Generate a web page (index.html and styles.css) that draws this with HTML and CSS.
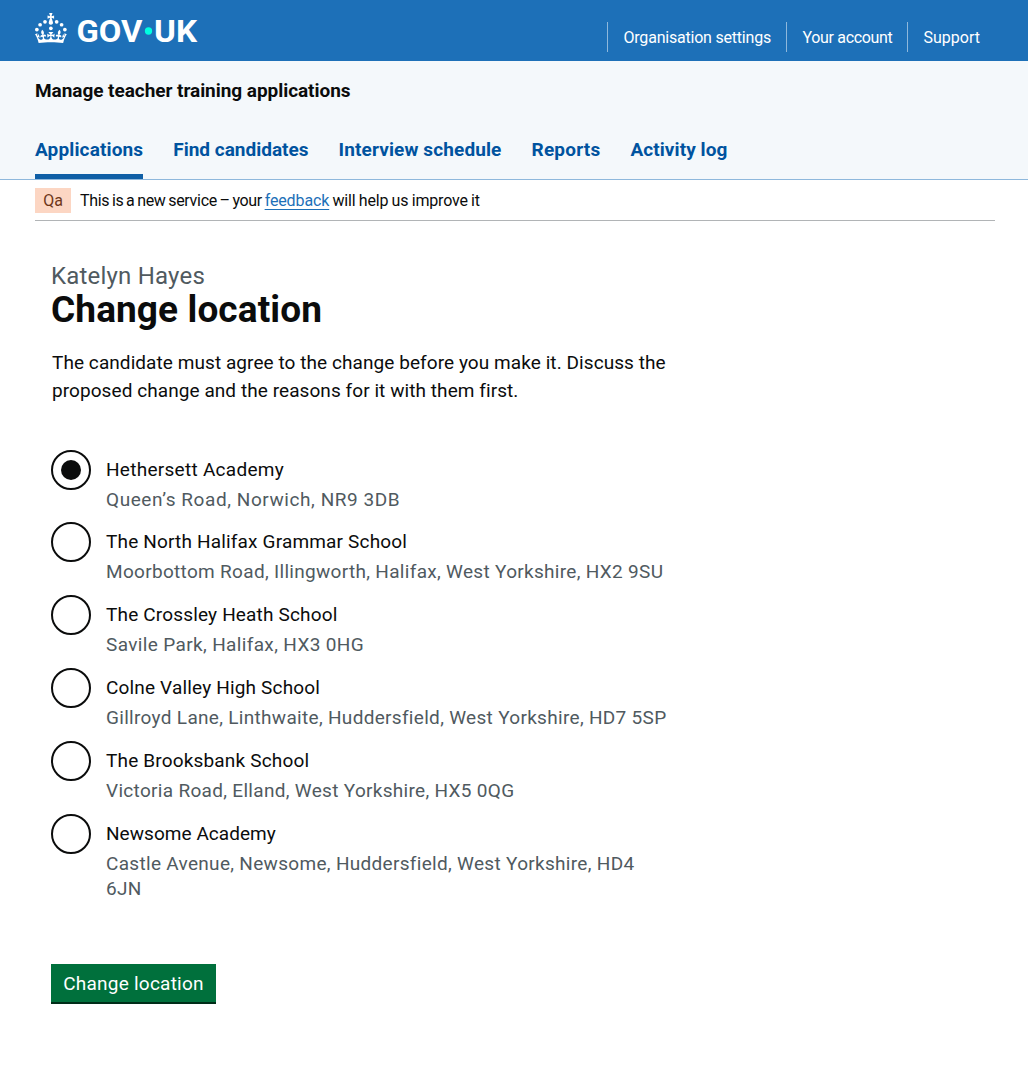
FILE: index.html
```html
<!DOCTYPE html>
<html lang="en">
<head>
<meta charset="utf-8">
<title>Change location - Manage teacher training applications</title>
<link rel="stylesheet" href="styles.css">
</head>
<body>
<header class="header">
  <svg class="logo" viewBox="0 0 324 60" width="162" height="30" role="img" aria-label="GOV.UK">
    <g fill="#fff">
      <circle cx="20" cy="17.6" r="3.7"/><circle cx="10.2" cy="23.5" r="3.7"/><circle cx="3.7" cy="33.2" r="3.7"/>
      <circle cx="31.7" cy="30.6" r="3.7"/><circle cx="43.3" cy="17.6" r="3.7"/><circle cx="53.2" cy="23.5" r="3.7"/><circle cx="59.7" cy="33.2" r="3.7"/>
      <path d="M33.1,9.8c.2-.1.3-.3.5-.5l4.6,2.4v-6.8l-4.6,1.5c-.1-.2-.3-.3-.5-.5l1.9-5.9h-6.7l1.9,5.9c-.2.1-.3.3-.5.5l-4.6-1.5v6.8l4.6-2.4c.1.2.3.3.5.5l-2.6,8c-.9,2.8,1.2,5.7,4.1,5.7h0c3,0,5.1-2.9,4.1-5.7l-2.6-8ZM37,37.9s-3.4,3.8-4.1,6.1c2.2,0,4.2-.5,6.4-2.8l-.7,8.5c-2-2.8-4.4-4.1-5.7-3.8.1,3.1.5,6.7,5.8,7.2,3.7.3,6.7-1.5,7-3.8.4-2.6-2-4.3-3.7-1.6-1.4-4.5,2.4-6.1,4.9-3.2-1.9-4.5-1.8-7.7,2.4-10.9,3,4,2.6,7.3-1.2,11.1,2.4-1.3,6.2,0,4,4.6-1.2-2.8-3.7-2.2-4.2.2-.3,1.7.7,3.7,3,4.2,1.9.3,4.7-.9,7-5.9-1.3,0-2.4.7-3.9,1.7l2.4-8c.6,2.3,1.4,3.7,2.2,4.5.6-1.6.5-2.8,0-5.3l5,1.8c-2.6,3.6-5.2,8.7-7.3,17.5-7.4-1.1-15.7-1.7-24.5-1.7h0c-8.8,0-17.1.6-24.5,1.7-2.1-8.9-4.7-13.9-7.3-17.5l5-1.8c-.5,2.5-.6,3.7,0,5.3.8-.8,1.6-2.3,2.2-4.5l2.4,8c-1.5-1-2.6-1.7-3.9-1.7,2.3,5,5.2,6.2,7,5.9,2.3-.4,3.3-2.4,3-4.2-.5-2.4-3-3.1-4.2-.2-2.2-4.6,1.6-6,4-4.6-3.7-3.7-4.2-7.1-1.2-11.1,4.2,3.2,4.3,6.4,2.4,10.9,2.5-2.8,6.3-1.3,4.9,3.2-1.8-2.7-4.1-1-3.7,1.6.3,2.3,3.3,4.1,7,3.8,5.4-.5,5.7-4.2,5.8-7.2-1.3-.2-3.7,1-5.7,3.8l-.7-8.5c2.2,2.3,4.2,2.7,6.4,2.8-.7-2.3-4.1-6.1-4.1-6.1h10.6,0Z"/>
      <text class="logo-text" x="83" y="57.5" textLength="132" lengthAdjust="spacingAndGlyphs">GOV</text>
      <text class="logo-text" x="238" y="57.5" textLength="86" lengthAdjust="spacingAndGlyphs">UK</text>
    </g>
    <circle cx="227" cy="36" r="7.3" fill="#00ffe0"/>
  </svg>
  <nav class="account">
    <a class="account-link organisation">Organisation settings</a>
    <a class="account-link your-account">Your account</a>
    <a class="account-link support">Support</a>
  </nav>
</header>
<section class="service">
  <div class="service-name">Manage teacher training applications</div>
  <nav class="tabs">
    <a class="tab current">Applications</a>
    <a class="tab find">Find candidates</a>
    <a class="tab interview">Interview schedule</a>
    <a class="tab reports">Reports</a>
    <a class="tab activity">Activity log</a>
  </nav>
</section>
<div class="phase">
  <span class="tag">Qa</span>
  <span class="phase-text"><span class="phase-lead">This is a new service – your </span><a class="link">feedback</a><span class="phase-tail"> will help us improve it</span></span>
</div>
<main class="main">
  <div class="caption">Katelyn Hayes</div>
  <h1 class="title">Change location</h1>
  <p class="intro">The candidate must agree to the change before you make it. Discuss the <br>proposed change and the reasons for it with them first.</p>
  <div class="options">
    <label class="option hethersett"><span class="radio checked"></span><span class="words"><span class="school">Hethersett Academy</span><span class="address">Queen’s Road, Norwich, NR9 3DB</span></span></label>
    <label class="option halifax"><span class="radio"></span><span class="words"><span class="school">The North Halifax Grammar School</span><span class="address">Moorbottom Road, Illingworth, Halifax, West Yorkshire, HX2 9SU</span></span></label>
    <label class="option crossley"><span class="radio"></span><span class="words"><span class="school">The Crossley Heath School</span><span class="address">Savile Park, Halifax, HX3 0HG</span></span></label>
    <label class="option colne"><span class="radio"></span><span class="words"><span class="school">Colne Valley High School</span><span class="address">Gillroyd Lane, Linthwaite, Huddersfield, West Yorkshire, HD7 5SP</span></span></label>
    <label class="option brooksbank"><span class="radio"></span><span class="words"><span class="school">The Brooksbank School</span><span class="address">Victoria Road, Elland, West Yorkshire, HX5 0QG</span></span></label>
    <label class="option newsome"><span class="radio"></span><span class="words"><span class="school">Newsome Academy</span><span class="address">Castle Avenue, Newsome, Huddersfield, West Yorkshire, HD4<br>6JN</span></span></label>
  </div>
  <button class="button">Change location</button>
</main>
</body>
</html>
```
FILE: styles.css
```css
* { box-sizing: border-box; }
body { margin: 0; background: #fff; color: #0b0c0c; font-family: Roboto, "Liberation Sans", sans-serif; font-size: 19px; white-space: nowrap; }
.header { height: 61px; background: #1d70b8; padding: 13px 34px 0 35px; display: flex; justify-content: space-between; align-items: flex-start; }
.logo { display: block; overflow: visible; }
.logo-text { font-size: 61px; font-weight: 700; }
.account { display: flex; margin-top: 9px; }
.account-link { height: 30px; line-height: 32px; font-size: 16px; color: #fff; border-left: 1px solid #8eb8dc; padding-left: 15.5px; }
.organisation { width: 179px; letter-spacing: -0.21px; }
.your-account { width: 121px; letter-spacing: -0.33px; }
.support { width: 87px; }
.service { height: 119px; background: #f4f8fb; border-bottom: 1px solid #8eb8dc; padding: 17px 35px 0; display: flex; flex-direction: column; justify-content: space-between; }
.service-name { font-weight: 700; line-height: 25px; letter-spacing: -0.05px; }
.tabs { display: flex; gap: 30px; height: 59px; }
.tab { color: #00539f; font-weight: 700; line-height: 59px; height: 59px; }
.current { border-bottom: 5px solid #0f5fa6; letter-spacing: 0.14px; }
.interview { letter-spacing: 0.12px; }
.reports { letter-spacing: 0.2px; }
.activity { letter-spacing: 0.08px; }
.phase { margin: 0 33px 0 35px; height: 41px; border-bottom: 1px solid #b1b4b6; display: flex; gap: 9px; align-items: center; font-size: 16px; }
.tag { width: 36px; height: 25px; background: #fcd6c3; color: #6e3619; text-align: center; line-height: 25px; }
.phase-lead { letter-spacing: -0.31px; word-spacing: -1px; }
.phase-tail { letter-spacing: -0.17px; word-spacing: -0.5px; }
.link { color: #1d70b8; text-decoration: underline; text-underline-offset: 3px; letter-spacing: -0.12px; }
.main { padding: 40px 51px 0; }
.caption { font-size: 24px; line-height: 30px; color: #505a5f; letter-spacing: 0.2px; }
.title { margin: -1px 0 0; font-size: 37px; line-height: 40px; font-weight: 700; letter-spacing: 0.1px; }
.intro { margin: 19px 0 0; padding-left: 1px; line-height: 28px; letter-spacing: 0.07px; }
.options { margin-top: 45px; display: flex; flex-direction: column; gap: 11px; }
.option { display: flex; gap: 15px; }
.radio { width: 40px; height: 40px; border: 2px solid #0b0c0c; border-radius: 50%; display: grid; place-items: center; }
.checked::after { content: ""; width: 20px; height: 20px; border-radius: 50%; background: #0b0c0c; }
.words { display: flex; flex-direction: column; }
.school { line-height: 25px; padding-top: 7px; letter-spacing: 0.17px; }
.address { margin-top: 5px; line-height: 25px; color: #505a5f; letter-spacing: 0.31px; }
.hethersett { margin-bottom: -1px; }
.hethersett .school { letter-spacing: 0.28px; }
.hethersett .address { letter-spacing: 0.57px; }
.crossley .address { letter-spacing: 0.36px; }
.newsome .school { letter-spacing: 0.05px; }
.button { margin-top: 63px; width: 165px; height: 40px; border: 0; border-bottom: 2px solid #002d18; padding: 1px 0 0; background: #00703c; color: #fff; font: 19px/38px Roboto, "Liberation Sans", sans-serif; letter-spacing: 0.23px; display: block; }
```
